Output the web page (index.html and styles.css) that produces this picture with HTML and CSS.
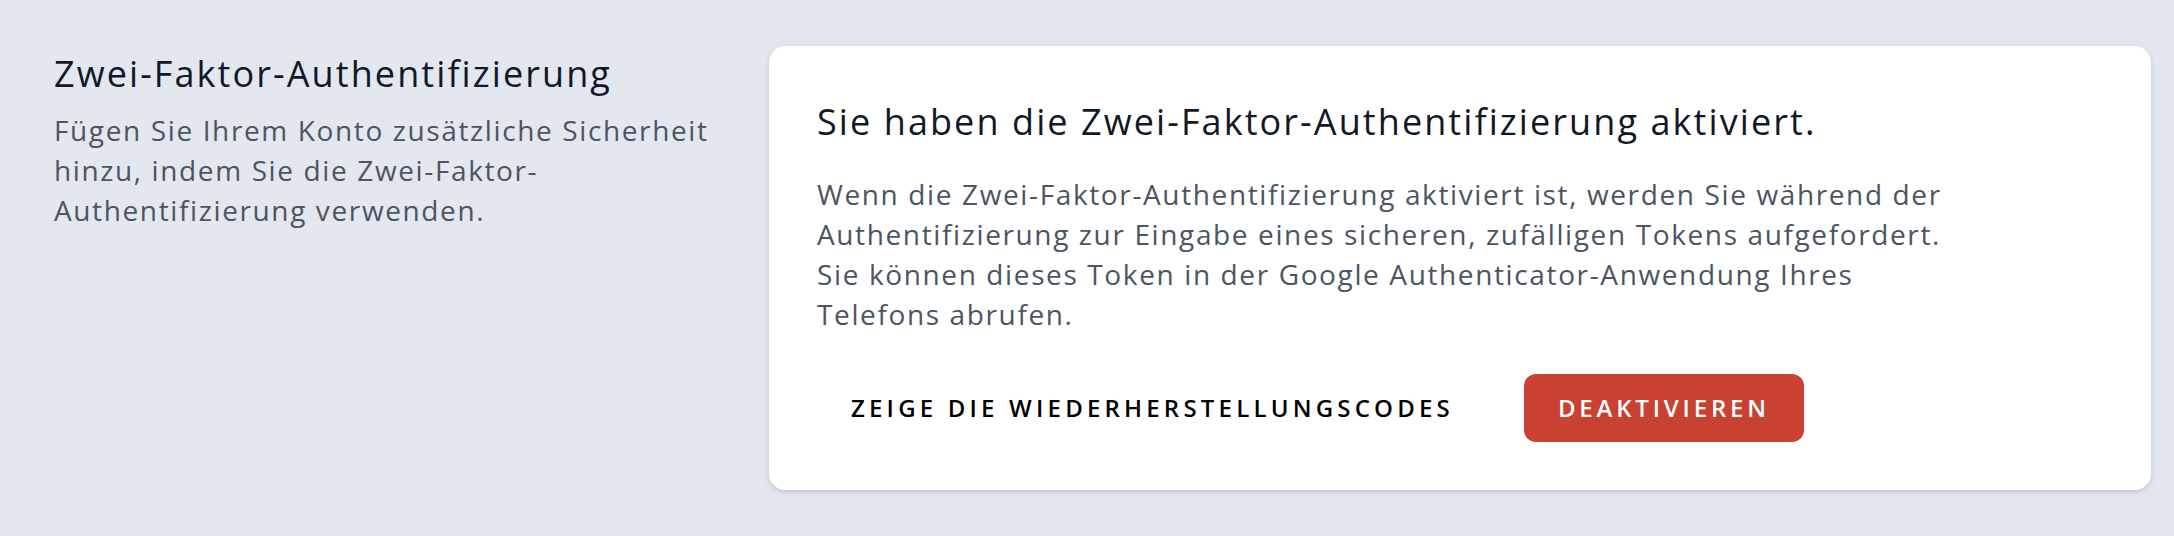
FILE: index.html
```html
<!DOCTYPE html>
<html lang="de">
<head>
<meta charset="utf-8">
<title>Zwei-Faktor-Authentifizierung</title>
<link rel="stylesheet" href="styles.css">
</head>
<body>
<div class="page">
  <section class="section">
    <div class="aside">
      <h3 class="aside-title">Zwei-Faktor-Authentifizierung</h3>
      <p class="aside-desc">Fügen Sie Ihrem Konto zusätzliche Sicherheit hinzu, indem Sie die Zwei-Faktor-Authentifizierung verwenden.</p>
    </div>
    <div class="card">
      <h3 class="card-title">Sie haben die Zwei-Faktor-Authentifizierung aktiviert.</h3>
      <p class="card-text">Wenn die Zwei-Faktor-Authentifizierung aktiviert ist, werden Sie während der Authentifizierung zur Eingabe eines sicheren, zufälligen Tokens aufgefordert. Sie können dieses Token in der Google Authenticator-Anwendung Ihres Telefons abrufen.</p>
      <div class="actions">
        <button class="btn btn-secondary" type="button">Zeige die Wiederherstellungscodes</button>
        <button class="btn btn-danger" type="button">Deaktivieren</button>
      </div>
    </div>
  </section>
</div>
</body>
</html>
```
FILE: styles.css
```css
html, body {
  margin: 0;
  padding: 0;
}
body {
  background: #e3e7f0;
  font-family: "Open Sans", "Liberation Sans", sans-serif;
  color: #111827;
  width: 2174px;
  height: 536px;
  overflow: hidden;
}
.page {
  padding: 46px 23px 0 54px;
}
.section {
  display: grid;
  grid-template-columns: repeat(3, 1fr);
  column-gap: 48px;
}
.aside {
  grid-column: span 1;
}
.aside-title {
  margin: 0;
  font-size: 36px;
  line-height: 56px;
  font-weight: 400;
  letter-spacing: 0.058em;
  color: #111827;
}
.aside-desc {
  margin: 8px 0 0;
  font-size: 28px;
  line-height: 40px;
  color: #4b5563;
  letter-spacing: 0.058em;
}
.card {
  grid-column: span 2;
  background: #ffffff;
  border-radius: 16px;
  box-shadow: 0 2px 6px rgba(0, 0, 0, 0.1), 0 2px 4px rgba(0, 0, 0, 0.06);
  padding: 48px;
  height: 444px;
  box-sizing: border-box;
}
.card-title {
  margin: 0;
  font-size: 36px;
  line-height: 56px;
  font-weight: 400;
  letter-spacing: 0.058em;
  color: #111827;
}
.card-text {
  margin: 24px 0 0;
  max-width: 1145px;
  font-size: 28px;
  line-height: 40px;
  letter-spacing: 0.058em;
  color: #4b5563;
}
.actions {
  margin-top: 40px;
  display: flex;
  align-items: center;
  gap: 36px;
}
.btn {
  font-family: inherit;
  font-size: 24px;
  line-height: 32px;
  font-weight: 600;
  text-transform: uppercase;
  letter-spacing: 4.2px;
  padding: 16px 32px;
  border: 2px solid transparent;
  border-radius: 12px;
  cursor: pointer;
}
.btn-secondary {
  background: #ffffff;
  color: #000000;
}
.btn-danger {
  background: #c94132;
  color: #ffffff;
  letter-spacing: 3.8px;
}
```
